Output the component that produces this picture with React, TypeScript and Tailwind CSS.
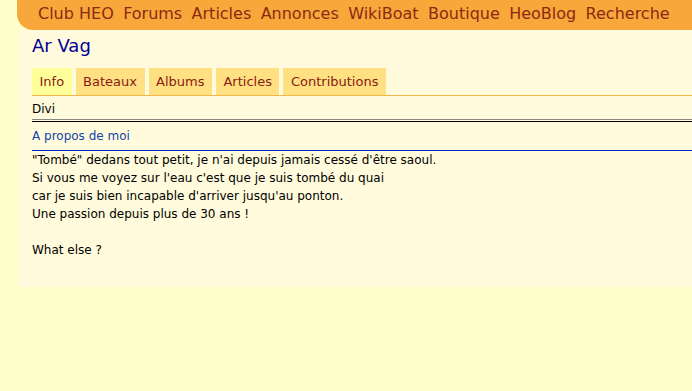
import React from "react";

const nav = ["Club HEO", "Forums", "Articles", "Annonces", "WikiBoat", "Boutique", "HeoBlog", "Recherche"];
const tabs = ["Info", "Bateaux", "Albums", "Articles", "Contributions"];

export default function App() {
  return (
    <div className="w-[692px] h-[391px] bg-[#ffffcc] overflow-hidden" style={{ fontFamily: '"DejaVu Sans", Verdana, sans-serif' }}>
      <div className="ml-[17px]">
        <div className="h-[30px] bg-[#f8a83a] rounded-bl-[16px] flex items-center pl-[21px] gap-[9.4px] text-[16px] text-[#8a2a12] leading-none pb-[3px]">
          {nav.map((n) => (
            <span key={n} className="whitespace-nowrap">{n}</span>
          ))}
        </div>
        <div className="ml-[1px] bg-[#fffbdc] h-[257px] pl-[14px]">
          <div className="pt-[5px] h-[38px] text-[18px] text-[#000099] leading-[22px]">Ar Vag</div>
          <div className="flex gap-[4px] border-b border-[#f0b848]">
            {tabs.map((t, i) => (
              <div
                key={t}
                className={`h-[27px] px-[7.5px] flex items-center text-[13px] text-[#8a1a10] ${i === 0 ? "bg-[#ffff99]" : "bg-[#ffe183]"}`}
              >
                {t}
              </div>
            ))}
          </div>
          <div className="text-[12px] text-black leading-[16px] pt-[5px] h-[23px]">Divi</div>
          <div className="h-[1px] bg-[#888888]" />
          <div className="h-[1px]" />
          <div className="h-[1px] bg-black" />
          <div className="text-[12px] text-[#1144aa] leading-[16px] pt-[6px] h-[28px]">A propos de moi</div>
          <div className="h-[1px] bg-[#0022cc]" />
          <div className="text-[12px] text-black leading-[18px] pt-[0px]">
            <div>"Tombé" dedans tout petit, je n'ai depuis jamais cessé d'être saoul.</div>
            <div>Si vous me voyez sur l'eau c'est que je suis tombé du quai</div>
            <div>car je suis bien incapable d'arriver jusqu'au ponton.</div>
            <div>Une passion depuis plus de 30 ans !</div>
            <div>&nbsp;</div>
            <div>What else ?</div>
          </div>
        </div>
      </div>
    </div>
  );
}
